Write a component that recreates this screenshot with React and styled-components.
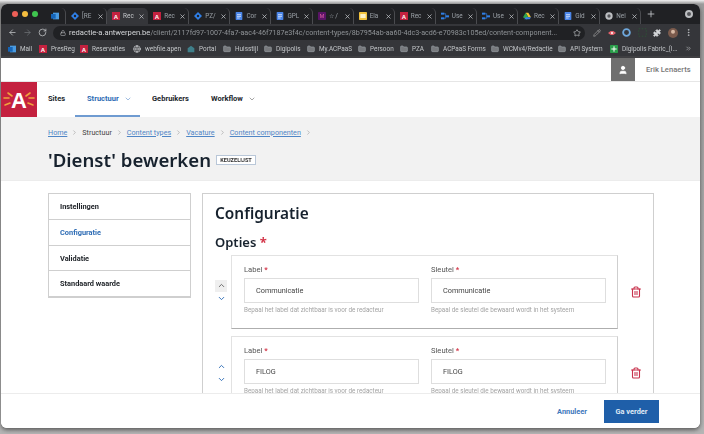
import React from 'react';
import styled, { createGlobalStyle } from 'styled-components';
import {
  ArrowLeft, ArrowRight, RotateCw, Lock, Star, X, Plus, Folder, Puzzle, MoreVertical,
  ChevronUp, ChevronDown, ChevronRight, ChevronsRight, User, Trash2, Globe, Pencil,
} from 'lucide-react';

const GlobalStyle = createGlobalStyle`
  html, body {
    margin: 0;
    padding: 0;
    width: 704px;
    height: 434px;
    overflow: hidden;
    background: #b9b9b9;
  }
  * { box-sizing: border-box; }
`;

const BASE_FONT = `'Noto Sans', 'Liberation Sans', sans-serif`;
const SMALL_FONT = `Roboto, 'Liberation Sans', sans-serif`;
const BLUE = '#2f6db5';

const Desktop = styled.div`
  width: 704px;
  height: 434px;
  padding: 4px 4px 6px 1px;
  background: linear-gradient(#f0f0f0 0, #9c9c9c 4px, #b5b5b5 100%);
  font-family: ${SMALL_FONT};
`;

const Window = styled.div`
  position: relative;
  width: 699px;
  height: 424px;
  border-radius: 6px;
  overflow: hidden;
  background: #fff;
  display: flex;
  flex-direction: column;
  box-shadow: 0 2px 4px rgba(0, 0, 0, 0.5);
  filter: blur(0.35px);
`;

/* browser chrome */
const TabStrip = styled.div`
  height: 20px;
  flex: none;
  display: flex;
  align-items: stretch;
  background: #202124;
`;

const Lights = styled.div`
  width: 46px;
  flex: none;
  display: flex;
  align-items: center;
  gap: 4px;
  padding: 0 0 1px 11px;
`;

const Light = styled.span`
  width: 6px;
  height: 6px;
  border-radius: 50%;
  background: ${(p) => p.$color};
`;

const Tab = styled.div`
  width: ${(p) => (p.$pinned ? '19px' : '41.1px')};
  flex: none;
  margin-top: 4px;
  display: flex;
  align-items: center;
  padding: 0 2px 0 ${(p) => (p.$pinned ? '4px' : '5px')};
  gap: 3px;
  color: #9aa0a6;
  font-size: 6.4px;
  white-space: nowrap;
  border-radius: 5px 5px 0 0;
  background: ${(p) => (p.$active ? '#35363a' : 'transparent')};
  border-right: 1px solid ${(p) => (p.$active ? 'transparent' : '#4a4b4f')};
`;

const TabTitle = styled.span`
  flex: 1;
  color: ${(p) => (p.$active ? '#c4c7ca' : '#9aa0a6')};
`;

const NewTab = styled.div`
  width: 20px;
  flex: none;
  display: flex;
  align-items: center;
  justify-content: center;
  color: #c4c7ca;
`;

const StripEnd = styled.div`
  margin-left: auto;
  display: flex;
  align-items: center;
  padding-right: 7px;
`;

const SettingsDot = styled.span`
  width: 8px;
  height: 8px;
  border-radius: 50%;
  border: 2px solid #bdbfc2;
  background: #55565a;
`;

const Toolbar = styled.div`
  height: 17px;
  flex: none;
  display: flex;
  align-items: center;
  background: #35363a;
  color: #9aa0a6;
  padding-left: 7px;
`;

const NavIcons = styled.div`
  width: 45px;
  flex: none;
  display: flex;
  gap: 6px;
  align-items: center;
`;

const Address = styled.div`
  width: 532px;
  height: 14px;
  flex: none;
  border-radius: 7px;
  background: #202124;
  display: flex;
  align-items: center;
  gap: 3px;
  padding: 0 4px 0 7px;
  color: #8f9397;
  white-space: nowrap;
`;

const Host = styled.b`
  color: #d5d7da;
  font-weight: 400;
  font-size: 7.6px;
`;

const Url = styled.span`
  flex: 1;
  font-size: 7.15px;
`;

const Extensions = styled.div`
  flex: 1;
  display: flex;
  align-items: center;
  justify-content: space-between;
  padding: 0 7px 0 8px;
`;

const Bookmarks = styled.div`
  height: 17px;
  flex: none;
  display: flex;
  align-items: center;
  background: #35363a;
  border-bottom: 2px solid #3f3f42;
  color: #c4c7ca;
  font-size: 6.4px;
  padding-left: 7px;
  white-space: nowrap;
`;

const Bookmark = styled.div`
  width: ${(p) => p.$w}px;
  flex: none;
  display: flex;
  align-items: center;
  gap: 4px;
`;

const Fav = styled.span`
  width: ${(p) => p.$size || 8}px;
  height: ${(p) => p.$size || 8}px;
  flex: none;
  display: inline-flex;
  align-items: center;
  justify-content: center;
`;

/* app header */
const TopBar = styled.div`
  height: 24px;
  flex: none;
  display: flex;
  justify-content: flex-end;
  background: #fff;
  border-bottom: 1px solid #e6e6e6;
`;

const Avatar = styled.div`
  width: 24px;
  display: flex;
  align-items: center;
  justify-content: center;
  background: #6f6f6f;
`;

const UserName = styled.div`
  width: 65px;
  padding-left: 11px;
  font-size: 7.6px;
  font-weight: 500;
  color: #777;
  line-height: 23px;
  white-space: nowrap;
`;

const NavBar = styled.nav`
  height: 35px;
  flex: none;
  display: flex;
  background: #fff;
`;

const Logo = styled.div`
  width: 36px;
  height: 35px;
  flex: none;
  background: #c4213f;
`;

const NavList = styled.div`
  display: flex;
  padding-left: 11px;
`;

const NavItem = styled.div`
  width: ${(p) => p.$w}px;
  display: flex;
  align-items: center;
  gap: 5px;
  padding-left: ${(p) => p.$pad}px;
  font-size: 7.5px;
  font-weight: 700;
  color: ${(p) => (p.$active ? BLUE : '#22262b')};
  border-bottom: 2px solid ${(p) => (p.$active ? '#6f9bd1' : 'transparent')};
  white-space: nowrap;
`;

const PageHead = styled.header`
  height: 64px;
  flex: none;
  background: #f2f2f2;
  border-bottom: 1px solid #ececec;
  padding: 9px 0 0 47px;
`;

const Crumbs = styled.div`
  display: flex;
  align-items: center;
  height: 12px;
  font-size: 7.2px;
  color: #5e6166;
  white-space: nowrap;
`;

const Crumb = styled.span`
  color: ${(p) => (p.$link ? '#4f86c6' : '#444')};
  text-decoration: ${(p) => (p.$link ? 'underline' : 'none')};
`;

const CrumbSep = styled.span`
  display: inline-flex;
  width: 15px;
  justify-content: center;
  color: #9a9a9a;
`;

const TitleRow = styled.div`
  display: flex;
  align-items: center;
  gap: 5px;
  margin-top: 9px;
`;

const Title = styled.h1`
  margin: 0;
  font-family: ${BASE_FONT};
  font-size: 18.6px;
  line-height: 26px;
  font-weight: 600;
  color: #17222e;
  white-space: nowrap;
`;

const Badge = styled.span`
  width: 40px;
  height: 10px;
  margin-top: -1px;
  border: 1px solid #b9c7d8;
  background: #fff;
  font-size: 5.6px;
  font-weight: 700;
  line-height: 8px;
  text-align: center;
  color: #333;
`;

/* body */
const Content = styled.main`
  flex: 1;
  min-height: 0;
  display: flex;
  align-items: flex-start;
  gap: 11px;
  padding: 12px 0 0 47px;
  overflow: hidden;
`;

const SideMenu = styled.div`
  width: 143px;
  flex: none;
  border: 1px solid #cfcfcf;
  border-bottom-width: 2px;
`;

const SideItem = styled.div`
  height: ${(p) => (p.$first ? '25px' : '25.7px')};
  padding-left: 11px;
  line-height: 25px;
  font-size: 7.4px;
  font-weight: 700;
  color: ${(p) => (p.$active ? BLUE : '#22262b')};
  border-top: ${(p) => (p.$first ? '0' : '1px solid #cfcfcf')};
`;

const Panel = styled.section`
  width: 452px;
  flex: none;
  height: 300px;
  border: 1px solid #cfcfcf;
  padding: 9px 0 0 12px;
  font-family: ${SMALL_FONT};
`;

const PanelTitle = styled.h2`
  margin: 0;
  font-family: ${BASE_FONT};
  font-size: 15.4px;
  line-height: 22px;
  font-weight: 600;
  color: #17222e;
`;

const SubTitle = styled.h3`
  margin: 8px 0 0;
  font-family: ${BASE_FONT};
  font-size: 13px;
  line-height: 18px;
  font-weight: 600;
  color: #17222e;
`;

const Required = styled.span`
  color: #d4374a;
  font-weight: 700;
`;

const OptionRow = styled.div`
  display: flex;
  align-items: center;
  height: 74px;
  margin-top: ${(p) => p.$top}px;
`;

const Mover = styled.div`
  width: 16px;
  flex: none;
  display: flex;
  flex-direction: column;
  align-items: center;
  gap: 1px;
  padding-right: 4px;
`;

const MoveButton = styled.span`
  width: 12px;
  height: 12px;
  display: flex;
  align-items: center;
  justify-content: center;
  color: ${(p) => (p.$disabled ? '#666' : BLUE)};
  background: ${(p) => (p.$disabled ? '#efefef' : 'transparent')};
`;

const OptionCard = styled.div`
  width: 387px;
  height: 74px;
  flex: none;
  display: grid;
  grid-template-columns: 175px 175px;
  gap: 12px;
  padding: 8px 12px 0;
  border: 1px solid #e2e2e2;
  border-bottom: 1px solid #aeaeae;
  border-right-color: #cfcfcf;
`;

const FieldLabel = styled.div`
  font-size: 7.6px;
  line-height: 12px;
  color: #555;
`;

const FieldInput = styled.div`
  height: 25px;
  margin-top: 2px;
  border: 1px solid #dedede;
  padding-left: 11px;
  font-size: 7.3px;
  line-height: 23px;
  color: #444;
`;

const FieldHint = styled.div`
  margin-top: 3px;
  font-size: 6.3px;
  line-height: 9px;
  color: #a3a3a3;
  white-space: nowrap;
`;

const Remove = styled.span`
  display: flex;
  margin-left: 12px;
  color: #c8324d;
`;

const Footer = styled.footer`
  position: absolute;
  left: 0;
  right: 0;
  bottom: 0;
  height: 35px;
  display: flex;
  align-items: center;
  justify-content: flex-end;
  gap: 17px;
  padding: 0 41px 0 0;
  background: #fff;
  border-top: 1px solid #ececec;
`;

const Cancel = styled.span`
  font-size: 7.4px;
  font-weight: 700;
  color: #3f78bd;
`;

const Primary = styled.button`
  width: 55px;
  height: 23px;
  border: 0;
  padding: 0;
  background: #1f5fa9;
  color: #dfe9f5;
  font-family: inherit;
  font-size: 7.4px;
  font-weight: 700;
`;

function Favicon({ kind }) {
  const glyphs = {
    outlook: <><rect x="3" y="1" width="9" height="10" fill="#4a9be0" /><rect x="0" y="3" width="7" height="7" fill="#1565b8" /></>,
    jira: <><path d="M6 0l6 6-6 6-6-6z" fill="#2f7fe6" /><circle cx="6" cy="6" r="1.8" fill="#202124" /></>,
    antwerp: <><rect width="12" height="12" fill="#c4213f" /><text x="6" y="10" fontSize="9" fontWeight="700" fill="#fff" textAnchor="middle" fontFamily="Liberation Sans">A</text></>,
    doc: <><rect x="1" width="10" height="12" rx="1" fill="#4a85e8" /><path d="M3 4h6M3 6.5h6M3 9h4" stroke="#fff" /></>,
    mail: <><rect width="12" height="12" rx="1" fill="#5a1467" /><text x="6" y="9.5" fontSize="8" fill="#e6a" textAnchor="middle" fontFamily="Liberation Sans">M</text></>,
    note: <><rect width="12" height="12" rx="1" fill="#f3c33c" /><rect x="2" y="3" width="8" height="6" fill="#fdf2c8" /></>,
    flow: <><rect y="1" width="5" height="3" fill="#2f7fe6" /><rect x="7" y="5" width="5" height="3" fill="#2f7fe6" /><rect y="8" width="5" height="3" fill="#2f7fe6" /><path d="M5 2.5h2v7H5" stroke="#2f7fe6" fill="none" /></>,
    drive: <><path d="M4 1h4l4 7H8z" fill="#f4c430" /><path d="M4 1l4 7-2 3.5-6-3.5z" fill="#2da44e" /><path d="M2 11l2-3h8l-2 3z" fill="#3b7de8" /></>,
    circle: <><circle cx="6" cy="6" r="5.5" fill="#bdbfc2" /><circle cx="6" cy="6" r="2.5" fill="#55565a" /></>,
    sheet: <><rect width="12" height="12" rx="1" fill="#2a9d4a" /><path d="M6 2v8M2 6h8" stroke="#fff" strokeWidth="1.5" /></>,
    portal: <path d="M6 1l5 4v6H1V5z" fill="#3f7f8a" />,
  };
  return <svg width="100%" height="100%" viewBox="0 0 12 12">{glyphs[kind]}</svg>;
}

const TABS = [
  ['jira', '[RE'], ['antwerp', 'Rec', true], ['antwerp', 'Rec'], ['jira', 'PZ/'], ['doc', 'Cor'], ['doc', 'GPL'],
  ['mail', '☆ /'], ['note', 'Ela'], ['antwerp', 'Rec'], ['flow', 'Use'], ['flow', 'Use'], ['drive', 'Rec'],
  ['doc', 'Gid'], ['circle', 'Nei'],
];

const BOOKMARKS = [
  ['outlook', 'Mail', 31], ['antwerp', 'PresReg', 41], ['antwerp', 'Reservaties', 53], ['globe', 'webfile.apen', 54],
  ['portal', 'Portal', 36], ['folder', 'Huisstijl', 41], ['folder', 'Digipolis', 43], ['folder', 'My.ACPaaS', 51],
  ['folder', 'Persoon', 42], ['folder', 'PZA', 31], ['folder', 'ACPaaS Forms', 60], ['folder', 'WCMv4/Redactie', 67],
  ['folder', 'API System', 52], ['sheet', 'Digipolis Fabric_(I...', 75],
];

const OPTIONS = [
  { value: 'Communicatie', top: 4, first: true },
  { value: 'FILOG', top: 7 },
];

function Field({ label, value, hint }) {
  return (
    <div>
      <FieldLabel>{label} <Required>*</Required></FieldLabel>
      <FieldInput>{value}</FieldInput>
      <FieldHint>{hint}</FieldHint>
    </div>
  );
}

function App() {
  return (
    <Desktop>
      <GlobalStyle />
      <Window>
        <TabStrip>
          <Lights>
            <Light $color="#ed5f57" />
            <Light $color="#f4bd3f" />
            <Light $color="#3fc54f" />
          </Lights>
          <Tab $pinned><Fav><Favicon kind="outlook" /></Fav></Tab>
          {TABS.map(([kind, title, active], i) => (
            <Tab key={i} $active={active}>
              <Fav><Favicon kind={kind} /></Fav>
              <TabTitle $active={active}>{title}</TabTitle>
              <X size={7} strokeWidth={2.5} color="#c4c7ca" />
            </Tab>
          ))}
          <NewTab><Plus size={10} /></NewTab>
          <StripEnd><SettingsDot /></StripEnd>
        </TabStrip>

        <Toolbar>
          <NavIcons>
            <ArrowLeft size={9} color="#c4c7ca" />
            <ArrowRight size={9} color="#6e7175" />
            <RotateCw size={9} color="#c4c7ca" />
          </NavIcons>
          <Address>
            <Lock size={6} color="#c4c7ca" />
            <Url><Host>redactie-a.antwerpen.be</Host>/client/2117fd97-1007-4fa7-aac4-46f7187e3f4c/content-types/8b7954ab-aa60-4dc3-acd6-e70983c105ed/content-component...</Url>
            <Star size={8} color="#c4c7ca" />
          </Address>
          <Extensions>
            <Pencil size={8} color="#a8a8a8" />
            <Fav><svg width="100%" height="100%" viewBox="0 0 12 12"><path d="M0 6l4-3h4l4 3-4 3H4z" fill="#e2606a" /><circle cx="6" cy="6" r="1.5" fill="#fff" /></svg></Fav>
            <Fav $size={9}><svg width="100%" height="100%" viewBox="0 0 12 12"><circle cx="6" cy="6" r="4.5" fill="none" stroke="#6fa8dc" strokeWidth="2.4" /></svg></Fav>
            <Fav $size={9}><svg width="100%" height="100%" viewBox="0 0 12 12"><rect x="1" y="1" width="10" height="10" fill="none" stroke="#2c5a35" strokeDasharray="2 2" /></svg></Fav>
            <Puzzle size={8} color="#d5d7da" fill="#d5d7da" />
            <Fav $size={10}><svg width="100%" height="100%" viewBox="0 0 12 12"><circle cx="6" cy="6" r="6" fill="#7a5a4c" /><circle cx="6" cy="4.5" r="2.4" fill="#d7b9a4" /></svg></Fav>
            <MoreVertical size={9} color="#c4c7ca" />
          </Extensions>
        </Toolbar>

        <Bookmarks>
          {BOOKMARKS.map(([kind, title, width]) => (
            <Bookmark key={title} $w={width}>
              {kind === 'folder' && <Folder size={8} color="#9aa0a6" fill="#77797d" />}
              {kind === 'globe' && <Globe size={8} color="#d5d7da" />}
              {kind !== 'folder' && kind !== 'globe' && <Fav><Favicon kind={kind} /></Fav>}
              <span>{title}</span>
            </Bookmark>
          ))}
          <ChevronsRight size={7} />
        </Bookmarks>

        <TopBar>
          <Avatar><User size={10} color="#fff" fill="#fff" /></Avatar>
          <UserName>Erik Lenaerts</UserName>
        </TopBar>

        <NavBar>
          <Logo>
            <svg width="36" height="35" viewBox="0 0 36 35">
              <g stroke="#f0a23c" strokeWidth="1.6" strokeLinecap="round">
                <path d="M7 11l4 3M3 16h5M4 23l5-2M29 11l-4 3M33 16h-5M32 23l-5-2" />
              </g>
              <text x="18" y="26" fontSize="22" fontWeight="700" fill="#fff" textAnchor="middle" fontFamily="Liberation Sans">A</text>
            </svg>
          </Logo>
          <NavList>
            <NavItem $w={27} $pad={0}>Sites</NavItem>
            <NavItem $w={65} $pad={12} $active>Structuur <ChevronDown size={8} color="#6f9bd1" /></NavItem>
            <NavItem $w={59} $pad={12}>Gebruikers</NavItem>
            <NavItem $w={60} $pad={12}>Workflow <ChevronDown size={8} color="#777" /></NavItem>
          </NavList>
        </NavBar>

        <PageHead>
          <Crumbs>
            <Crumb $link>Home</Crumb><CrumbSep><ChevronRight size={7} /></CrumbSep>
            <Crumb>Structuur</Crumb><CrumbSep><ChevronRight size={7} /></CrumbSep>
            <Crumb $link>Content types</Crumb><CrumbSep><ChevronRight size={7} /></CrumbSep>
            <Crumb $link>Vacature</Crumb><CrumbSep><ChevronRight size={7} /></CrumbSep>
            <Crumb $link>Content componenten</Crumb><CrumbSep><ChevronRight size={7} /></CrumbSep>
          </Crumbs>
          <TitleRow>
            <Title>'Dienst' bewerken</Title>
            <Badge>KEUZELIJST</Badge>
          </TitleRow>
        </PageHead>

        <Content>
          <SideMenu>
            <SideItem $first>Instellingen</SideItem>
            <SideItem $active>Configuratie</SideItem>
            <SideItem>Validatie</SideItem>
            <SideItem>Standaard waarde</SideItem>
          </SideMenu>
          <Panel>
            <PanelTitle>Configuratie</PanelTitle>
            <SubTitle>Opties <Required>*</Required></SubTitle>
            {OPTIONS.map((option) => (
              <OptionRow key={option.value} $top={option.top}>
                <Mover>
                  <MoveButton $disabled={option.first}><ChevronUp size={9} strokeWidth={2.5} /></MoveButton>
                  <MoveButton><ChevronDown size={9} strokeWidth={2.5} /></MoveButton>
                </Mover>
                <OptionCard>
                  <Field label="Label" value={option.value} hint="Bepaal het label dat zichtbaar is voor de redacteur" />
                  <Field label="Sleutel" value={option.value} hint="Bepaal de sleutel die bewaard wordt in het systeem" />
                </OptionCard>
                <Remove><Trash2 size={12} strokeWidth={2.2} /></Remove>
              </OptionRow>
            ))}
          </Panel>
        </Content>

        <Footer>
          <Cancel>Annuleer</Cancel>
          <Primary>Ga verder</Primary>
        </Footer>
      </Window>
    </Desktop>
  );
}

export default App;
